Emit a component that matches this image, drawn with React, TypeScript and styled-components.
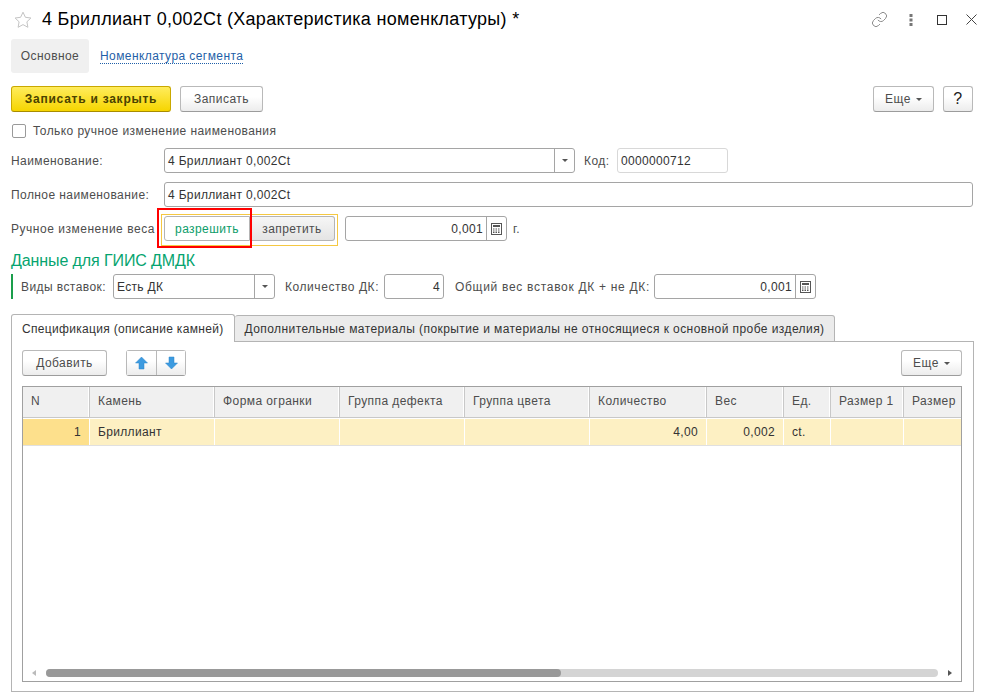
import React from "react";
import styled, { createGlobalStyle } from "styled-components";
import { Link } from "lucide-react";

const GlobalStyle = createGlobalStyle`
  html, body {
    margin: 0;
    padding: 0;
    background: #fff;
  }
  * {
    box-sizing: border-box;
  }
`;

const columns = [
  { title: "N", width: 67 },
  { title: "Камень", width: 125 },
  { title: "Форма огранки", width: 125 },
  { title: "Группа дефекта", width: 125 },
  { title: "Группа цвета", width: 125 },
  { title: "Количество", width: 117 },
  { title: "Вес", width: 77 },
  { title: "Ед.", width: 47 },
  { title: "Размер 1", width: 73 },
  { title: "Размер", width: 57 },
];

const row = ["1", "Бриллиант", "", "", "", "4,00", "0,002", "ct.", "", ""];
const rightAligned = [0, 5, 6];

const CalcIcon = () => (
  <svg width="11" height="12" viewBox="0 0 11 12">
    <rect x="0.5" y="0.5" width="10" height="11" fill="#fff" stroke="#555" />
    <rect x="2" y="2" width="7" height="2" fill="#555" />
    {[5.5, 7.5, 9].map((y) =>
      [2, 4.5, 7].map((x) => (
        <rect key={`${x}-${y}`} x={x} y={y} width="1.5" height="1" fill="#555" />
      ))
    )}
  </svg>
);

const ArrowIcon = ({ down }: { down?: boolean }) => (
  <svg width="13" height="14" viewBox="0 0 13 14">
    <path
      d={down ? "M4 1h5v6h3.5L6.5 13 .5 7H4z" : "M4 13h5V7h3.5L6.5 1 .5 7H4z"}
      fill="#3d9be0"
      stroke="#2f86c8"
      strokeWidth="0.5"
    />
  </svg>
);

const App = () => {
  return (
    <Page>
      <GlobalStyle />
      <TitleBar>
        <svg width="18" height="17" viewBox="0 0 18 17">
          <path
            d="M9 1.2l2.4 5.1 5.5.7-4 3.8 1 5.5L9 13.6l-4.9 2.7 1-5.5-4-3.8 5.5-.7z"
            fill="none"
            stroke="#c4c4c4"
          />
        </svg>
        <Title>4 Бриллиант 0,002Ct (Характеристика номенклатуры) *</Title>
        <WindowIcons>
          <Link size={17} color="#777" strokeWidth={1.2} />
          <svg width="4" height="12" viewBox="0 0 4 12">
            <rect x="0.5" y="0" width="3" height="3" fill="#777" />
            <rect x="0.5" y="4.5" width="3" height="3" fill="#777" />
            <rect x="0.5" y="9" width="3" height="3" fill="#777" />
          </svg>
          <svg width="10" height="10" viewBox="0 0 10 10">
            <rect x="0.5" y="0.5" width="9" height="9" fill="none" stroke="#333" />
          </svg>
          <svg width="11" height="11" viewBox="0 0 11 11">
            <path d="M.5.5l10 10M10.5.5l-10 10" stroke="#444" fill="none" />
          </svg>
        </WindowIcons>
      </TitleBar>

      <NavRow>
        <NavActive>Основное</NavActive>
        <NavLink>Номенклатура сегмента</NavLink>
      </NavRow>

      <Toolbar>
        <Button $variant="primary" $width={160}>
          Записать и закрыть
        </Button>
        <Button $width={83}>Записать</Button>
        <Spacer />
        <Button $width={61}>
          Еще <Caret />
        </Button>
        <Button $width={30}>
          <Help>?</Help>
        </Button>
      </Toolbar>

      <CheckRow>
        <CheckBox />
        <span>Только ручное изменение наименования</span>
      </CheckRow>

      <FormRow>
        <FieldLabel $width={153}>Наименование:</FieldLabel>
        <Field $width={411}>
          <FieldText>4 Бриллиант 0,002Ct</FieldText>
          <FieldButton>
            <Caret />
          </FieldButton>
        </Field>
        <FieldLabel $width={33} $gap={9}>
          Код:
        </FieldLabel>
        <Field $width={111} $light>
          <FieldText>0000000712</FieldText>
        </Field>
      </FormRow>

      <FormRow>
        <FieldLabel $width={153}>Полное наименование:</FieldLabel>
        <Field $width={809}>
          <FieldText>4 Бриллиант 0,002Ct</FieldText>
        </Field>
      </FormRow>

      <FormRow>
        <FieldLabel $width={150} $spacing={0.52}>
          Ручное изменение веса
        </FieldLabel>
        <SwitchFrame>
          <Highlight />
          <SwitchButton $active>разрешить</SwitchButton>
          <SwitchButton>запретить</SwitchButton>
        </SwitchFrame>
        <Field $width={162} $gap={7}>
          <FieldText $right>0,001</FieldText>
          <FieldButton>
            <CalcIcon />
          </FieldButton>
        </Field>
        <FieldLabel $width={20} $gap={6}>
          г.
        </FieldLabel>
      </FormRow>

      <SectionTitle>Данные для ГИИС ДМДК</SectionTitle>
      <GreenGroup>
        <FieldLabel $width={92}>Виды вставок:</FieldLabel>
        <Field $width={162}>
          <FieldText>Есть ДК</FieldText>
          <FieldButton>
            <Caret />
          </FieldButton>
        </Field>
        <FieldLabel $width={99} $gap={10} $spacing={0.56}>
          Количество ДК:
        </FieldLabel>
        <Field $width={60}>
          <FieldText $right>4</FieldText>
        </Field>
        <FieldLabel $width={199} $gap={11} $spacing={0.7}>
          Общий вес вставок ДК + не ДК:
        </FieldLabel>
        <Field $width={162}>
          <FieldText $right>0,001</FieldText>
          <FieldButton>
            <CalcIcon />
          </FieldButton>
        </Field>
      </GreenGroup>

      <Tabs>
        <Tab $active>Спецификация (описание камней)</Tab>
        <Tab>
          Дополнительные материалы (покрытие и материалы не относящиеся к
          основной пробе изделия)
        </Tab>
      </Tabs>

      <Panel>
        <PanelToolbar>
          <Button $width={85}>Добавить</Button>
          <ArrowGroup>
            <ArrowButton>
              <ArrowIcon />
            </ArrowButton>
            <ArrowButton>
              <ArrowIcon down />
            </ArrowButton>
          </ArrowGroup>
          <Spacer />
          <Button $width={61}>
            Еще <Caret />
          </Button>
        </PanelToolbar>

        <Table>
          <HeaderRow>
            {columns.map((c) => (
              <HeaderCell key={c.title} $width={c.width}>
                {c.title}
              </HeaderCell>
            ))}
          </HeaderRow>
          <DataRow>
            {row.map((value, i) => (
              <DataCell
                key={i}
                $width={columns[i].width}
                $right={rightAligned.includes(i)}
                $marker={i === 0}
              >
                {value}
              </DataCell>
            ))}
          </DataRow>
          <TableBody />
          <ScrollBar>
            <ScrollArrow $left />
            <ScrollTrack>
              <ScrollThumb />
            </ScrollTrack>
            <ScrollArrow />
          </ScrollBar>
        </Table>
      </Panel>
    </Page>
  );
};

export default App;

const Page = styled.div`
  width: 986px;
  height: 700px;
  overflow: hidden;
  padding: 0 13px 0 11px;
  background: #fff;
  color: #4d4d4d;
  font-family: "Liberation Sans", Arial, sans-serif;
  font-size: 12px;
  letter-spacing: 0.42px;
`;

const TitleBar = styled.div`
  height: 39px;
  display: flex;
  align-items: center;
  padding-left: 3px;
`;

const Title = styled.div`
  margin-left: 10px;
  font-size: 18px;
  letter-spacing: 0.29px;
  color: #000;
  white-space: nowrap;
`;

const WindowIcons = styled.div`
  margin-left: auto;
  margin-right: -4px;
  display: flex;
  align-items: center;

  & > svg:nth-child(2) {
    margin-left: 21px;
  }
  & > svg:nth-child(3) {
    margin-left: 24px;
  }
  & > svg:nth-child(4) {
    margin-left: 19px;
  }
`;

const NavRow = styled.div`
  height: 34px;
  display: flex;
  align-items: center;
`;

const NavActive = styled.div`
  width: 78px;
  height: 34px;
  display: flex;
  align-items: center;
  justify-content: center;
  background: #f0f0f0;
  border-radius: 3px;
  color: #4d4d4d;
`;

const NavLink = styled.span`
  margin-left: 11px;
  color: #1f5fa8;
  border-bottom: 1px dotted #1f5fa8;
  line-height: 14px;
`;

const Toolbar = styled.div`
  margin-top: 13px;
  height: 26px;
  display: flex;
  gap: 9px;
`;

const Spacer = styled.div`
  flex: 1;
`;

const Button = styled.div<{ $variant?: "primary"; $width: number }>`
  width: ${(p) => p.$width}px;
  height: 26px;
  display: flex;
  align-items: center;
  justify-content: center;
  gap: 5px;
  flex-shrink: 0;
  border-radius: 3px;
  border: 1px solid ${(p) => (p.$variant === "primary" ? "#c9a800" : "#b9b9b9")};
  border-bottom-color: ${(p) => (p.$variant === "primary" ? "#a88c00" : "#9c9c9c")};
  background: ${(p) =>
    p.$variant === "primary"
      ? "linear-gradient(#ffec5c, #f6d500)"
      : "linear-gradient(#fff 40%, #ececec)"};
  color: ${(p) => (p.$variant === "primary" ? "#4a4200" : "#4d4d4d")};
  font-weight: ${(p) => (p.$variant === "primary" ? "bold" : "normal")};
  letter-spacing: ${(p) => (p.$variant === "primary" ? 0.75 : 0.45)}px;
`;

const Help = styled.span`
  font-size: 16px;
  color: #222;
`;

const Caret = styled.span`
  display: inline-block;
  width: 0;
  height: 0;
  border-left: 3px solid transparent;
  border-right: 3px solid transparent;
  border-top: 3px solid #555;
`;

const CheckRow = styled.div`
  margin-top: 10px;
  height: 18px;
  display: flex;
  align-items: center;
  gap: 7px;
  padding-left: 1px;
  white-space: nowrap;
`;

const CheckBox = styled.div`
  width: 14px;
  height: 14px;
  border: 1px solid #9a9a9a;
  border-radius: 2px;
  background: #fff;
`;

const FieldLabel = styled.span<{ $width: number; $gap?: number; $spacing?: number }>`
  width: ${(p) => p.$width}px;
  margin-left: ${(p) => p.$gap ?? 0}px;
  letter-spacing: ${(p) => p.$spacing ?? 0.42}px;
  flex-shrink: 0;
  white-space: nowrap;
`;

const FormRow = styled.div`
  margin-top: 8px;
  height: 25px;
  display: flex;
  align-items: center;

  & + & {
    margin-top: 9px;
  }
`;

const Field = styled.div<{ $width: number; $light?: boolean; $gap?: number }>`
  width: ${(p) => p.$width}px;
  margin-left: ${(p) => p.$gap ?? 0}px;
  height: 25px;
  display: flex;
  align-items: center;
  flex-shrink: 0;
  background: #fff;
  border: 1px solid ${(p) => (p.$light ? "#d8d8d8" : "#a5a5a5")};
  border-radius: 3px;
`;

const FieldText = styled.div<{ $right?: boolean }>`
  flex: 1;
  padding: 0 3px;
  color: #333;
  letter-spacing: 0.33px;
  text-align: ${(p) => (p.$right ? "right" : "left")};
  white-space: nowrap;
`;

const FieldButton = styled.div`
  width: 20px;
  height: 100%;
  display: flex;
  align-items: center;
  justify-content: center;
  border-left: 1px solid #a5a5a5;
`;

const SwitchFrame = styled.div`
  position: relative;
  width: 177px;
  height: 32px;
  margin-top: 3px;
  flex-shrink: 0;
  display: flex;
  padding: 1px 2px 0;
  border: 1px solid #f5c842;
`;

const Highlight = styled.div`
  position: absolute;
  left: -5px;
  top: -7px;
  width: 95px;
  height: 40px;
  border: 2px solid #f00;
  pointer-events: none;
`;

const SwitchButton = styled.div<{ $active?: boolean }>`
  flex: 1;
  height: 25px;
  display: flex;
  align-items: center;
  justify-content: center;
  border: 1px solid #b4b4b4;
  border-radius: ${(p) => (p.$active ? "3px 0 0 3px" : "0 3px 3px 0")};
  border-left-width: ${(p) => (p.$active ? 1 : 0)}px;
  background: ${(p) => (p.$active ? "#fff" : "linear-gradient(#f6f6f6, #e4e4e4)")};
  color: ${(p) => (p.$active ? "#0d9d6a" : "#4d4d4d")};
`;

const SectionTitle = styled.div`
  margin-top: 10px;
  height: 19px;
  line-height: 19px;
  font-size: 16px;
  letter-spacing: -0.1px;
  color: #06a46f;
`;

const GreenGroup = styled.div`
  margin-top: 4px;
  height: 25px;
  display: flex;
  align-items: center;
  padding-left: 8px;
  border-left: 2px solid #1a9e4b;
`;

const Tabs = styled.div`
  margin-top: 15px;
  height: 28px;
  display: flex;
  align-items: flex-end;
  position: relative;
  z-index: 1;
`;

const Tab = styled.div<{ $active?: boolean }>`
  height: ${(p) => (p.$active ? 28 : 27)}px;
  display: flex;
  align-items: center;
  padding: 0 10px;
  white-space: nowrap;
  color: #333;
  letter-spacing: ${(p) => (p.$active ? 0.32 : 0.42)}px;
  border: 1px solid #b4b4b4;
  border-bottom: ${(p) => (p.$active ? "0" : "1px solid #b4b4b4")};
  border-left-width: ${(p) => (p.$active ? 1 : 0)}px;
  border-radius: 3px 3px 0 0;
  background: ${(p) => (p.$active ? "#fff" : "#ebebeb")};
`;

const Panel = styled.div`
  margin-top: -1px;
  height: 351px;
  width: 963px;
  padding: 8px 11px 9px 10px;
  display: flex;
  flex-direction: column;
  border: 1px solid #b4b4b4;
`;

const PanelToolbar = styled.div`
  height: 26px;
  display: flex;
`;

const ArrowGroup = styled.div`
  margin-left: 19px;
  display: flex;
  height: 26px;
  border: 1px solid #b9b9b9;
  border-bottom-color: #9c9c9c;
  border-radius: 3px;
`;

const ArrowButton = styled.div`
  width: 29px;
  display: flex;
  align-items: center;
  justify-content: center;
  background: linear-gradient(#fff 40%, #ececec);

  & + & {
    border-left: 1px solid #b9b9b9;
  }
`;

const Table = styled.div`
  margin-top: 10px;
  flex: 1;
  display: flex;
  flex-direction: column;
  width: 940px;
  border: 1px solid #a0a0a0;
  overflow: hidden;
`;

const HeaderRow = styled.div`
  height: 31px;
  display: flex;
  flex-shrink: 0;
  background: #f0f0f0;
  border-bottom: 1px solid #c8c8c8;
`;

const HeaderCell = styled.div<{ $width: number }>`
  width: ${(p) => p.$width}px;
  flex-shrink: 0;
  display: flex;
  align-items: center;
  padding: 0 0 2px 8px;
  white-space: nowrap;
  color: #4d4d4d;
  border-right: 1px solid #c8c8c8;
  box-shadow: inset -1px 0 0 #fff;

  &:last-child {
    border-right: 0;
    box-shadow: none;
  }
`;

const DataRow = styled.div`
  height: 28px;
  display: flex;
  flex-shrink: 0;
  border-top: 1px solid #fff;
  border-bottom: 1px solid #e0e0e0;
`;

const DataCell = styled.div<{ $width: number; $right?: boolean; $marker?: boolean }>`
  width: ${(p) => p.$width}px;
  flex-shrink: 0;
  display: flex;
  align-items: center;
  justify-content: ${(p) => (p.$right ? "flex-end" : "flex-start")};
  padding: 0 8px;
  color: #333;
  letter-spacing: 0.33px;
  background: ${(p) => (p.$marker ? "#fde08c" : "#fdf0c3")};
  border-right: 1px solid #fff;

  &:last-child {
    border-right: 0;
  }
`;

const TableBody = styled.div`
  flex: 1;
`;

const ScrollBar = styled.div`
  height: 11px;
  margin-bottom: 3px;
  display: flex;
  align-items: center;
  padding: 0 9px;
`;

const ScrollArrow = styled.span<{ $left?: boolean }>`
  width: 0;
  height: 0;
  border-top: 3px solid transparent;
  border-bottom: 3px solid transparent;
  ${(p) =>
    p.$left
      ? "border-right: 4px solid #bbb; margin-right: 10px;"
      : "border-left: 4px solid #555; margin-left: 10px;"}
`;

const ScrollTrack = styled.div`
  flex: 1;
  height: 8px;
  background: #d4d4d4;
  border-radius: 4px;
`;

const ScrollThumb = styled.div`
  width: 515px;
  height: 8px;
  background: #999;
  border-radius: 4px;
`;
